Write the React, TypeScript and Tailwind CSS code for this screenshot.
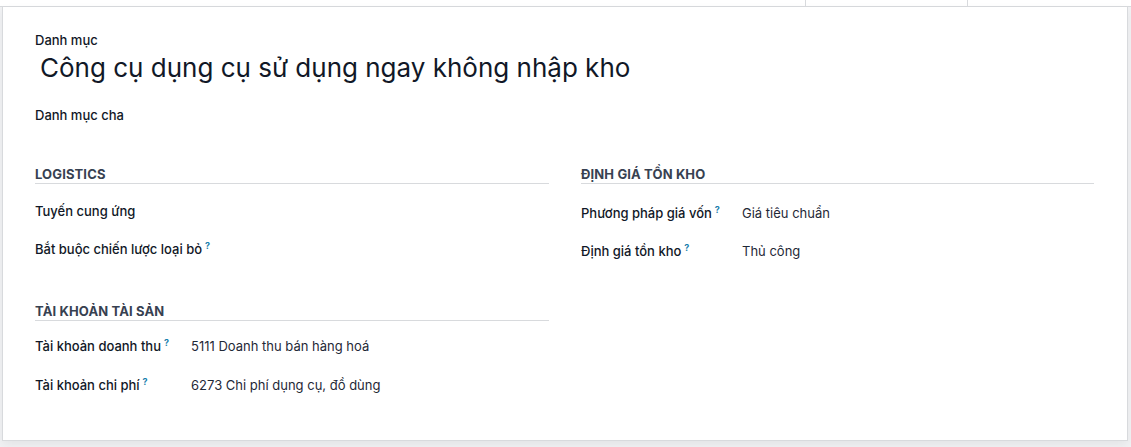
import React from 'react';

type Row = { label: string; help?: boolean; value?: string };

function Help() {
  return <sup className="ml-[3px] text-[9px] font-bold text-[#1b7fae] relative -top-[5px]">?</sup>;
}

function Group({ title, rows, labelW, rowsTop, rowH }: { title: string; rows: Row[]; labelW: string; rowsTop: string; rowH: string }) {
  return (
    <div>
      <div className="h-[19px] leading-[19px] text-[13px] font-bold uppercase tracking-[0.01em] text-[#374151] border-b border-[#d8dadd]">{title}</div>
      <div className={rowsTop}>
        {rows.map((r) => (
          <div key={r.label} className={`${rowH} flex items-center text-[13px] whitespace-nowrap`}>
            <div className={`${labelW} font-medium text-[#111827]`}>
              {r.label}
              {r.help && <Help />}
            </div>
            {r.value && <div className="text-[#1f2937]">{r.value}</div>}
          </div>
        ))}
      </div>
    </div>
  );
}

export default function App() {
  return (
    <div className="w-[1131px] h-[447px] bg-[#f1f2f4] overflow-hidden" style={{ fontFamily: 'Inter, "Noto Sans", sans-serif' }}>
      <div className="h-[7px] bg-white border-b border-[#d8dadd] flex">
        <div className="w-[805px]" />
        <div className="w-[162px] border-l border-[#d8dadd]" />
        <div className="flex-1 border-l border-[#d8dadd]" />
      </div>
      <div className="ml-[2px] w-[1126px] h-[434px] bg-white border-x border-b border-[#d8dadd] shadow-[0_4px_10px_rgba(0,0,0,0.06)] px-[32px] pt-[23px]">
        <div className="h-5 leading-5 text-[13px] font-medium text-[#111827]">Danh mục</div>
        <div className="ml-[5px] h-9 leading-9 text-[26px] text-[#111827]">Công cụ dụng cụ sử dụng ngay không nhập kho</div>
        <div className="mt-[19px] h-5 leading-5 text-[13px] font-medium text-[#111827]">Danh mục cha</div>
        <div className="mt-10 grid grid-cols-[514px_513px] gap-x-8">
          <div>
            <Group
              title="Logistics"
              labelW="w-[156px]"
              rowsTop="mt-[9px]"
              rowH="h-[38px]"
              rows={[{ label: 'Tuyến cung ứng' }, { label: 'Bắt buộc chiến lược loại bỏ', help: true }]}
            />
            <div className="mt-[33px]">
              <Group
                title="Tài khoản tài sản"
                labelW="w-[156px]"
                rowsTop="mt-[6px]"
                rowH="h-[39px]"
                rows={[
                  { label: 'Tài khoản doanh thu', help: true, value: '5111 Doanh thu bán hàng hoá' },
                  { label: 'Tài khoản chi phí', help: true, value: '6273 Chi phí dụng cụ, đồ dùng' },
                ]}
              />
            </div>
          </div>
          <div>
            <Group
              title="Định giá tồn kho"
              labelW="w-[161px]"
              rowsTop="mt-[11px]"
              rowH="h-[38px]"
              rows={[
                { label: 'Phương pháp giá vốn', help: true, value: 'Giá tiêu chuẩn' },
                { label: 'Định giá tồn kho', help: true, value: 'Thủ công' },
              ]}
            />
          </div>
        </div>
      </div>
    </div>
  );
}
